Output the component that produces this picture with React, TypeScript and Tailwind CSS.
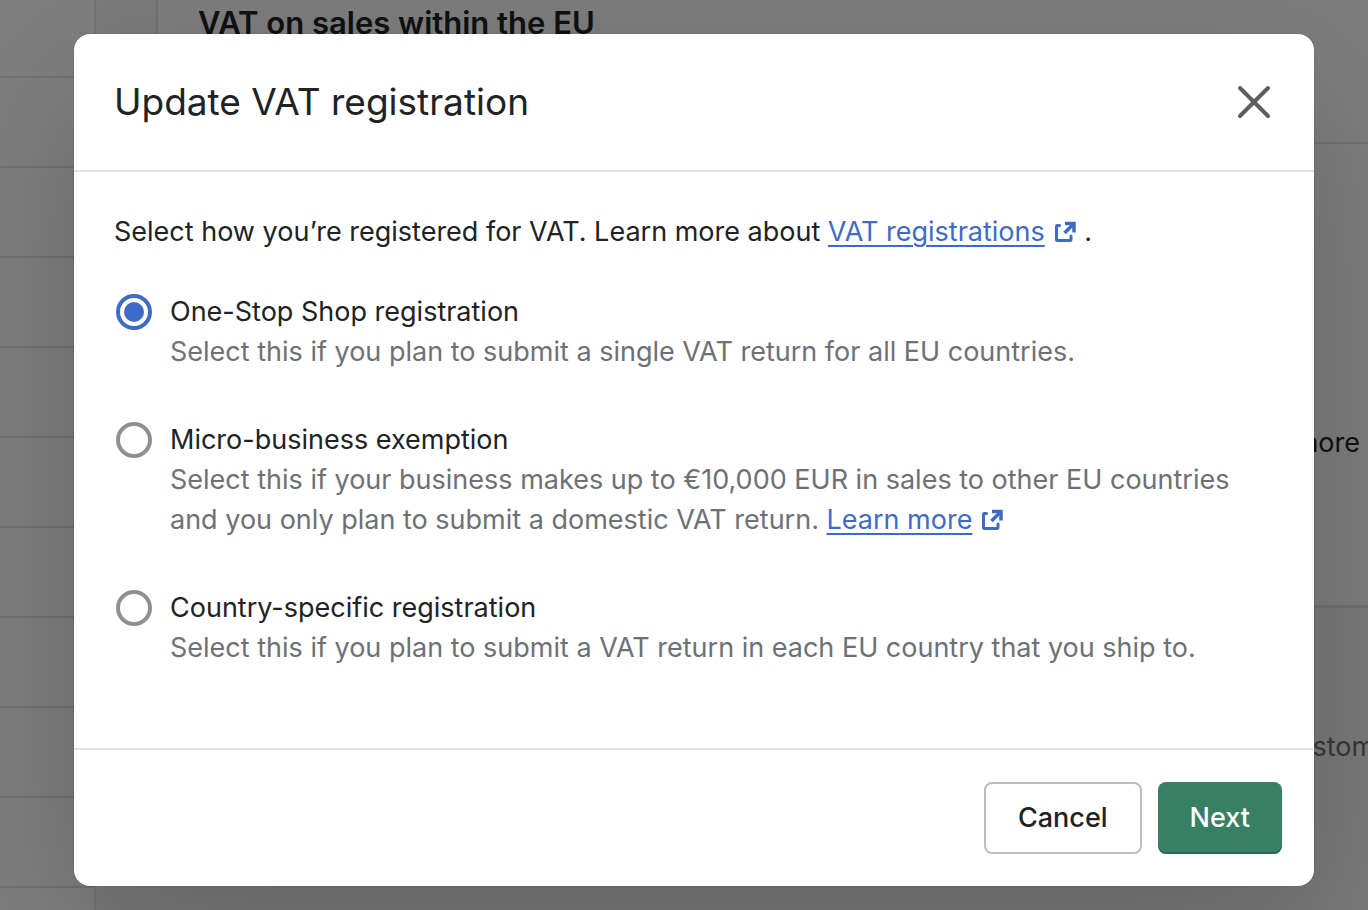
import { useState } from 'react';
import type { ReactNode } from 'react';

const navRows = ['Store details', 'Plan', 'Billing', 'Users', 'Payments', 'Checkout', 'Shipping', 'Taxes', 'Locations'];

function ExternalIcon() {
  return (
    <svg viewBox="0 0 40 40" className="-mr-2 inline-block h-10 w-10 align-bottom" fill="none" stroke="currentColor" strokeWidth="3" aria-hidden="true">
      <path d="M14.500 13.500h-2a1 1 0 0 0-1 1V27.500a1 1 0 0 0 1 1H25a1 1 0 0 0 1-1V24" strokeLinecap="round" />
      <path d="M20 11.500h9V20.500" strokeWidth="3.500" />
      <path d="M28.500 12L19.500 21" strokeWidth="3.500" />
    </svg>
  );
}

function ExternalLink({ children }: { children: ReactNode }) {
  return (
    <a href="#learn" className="whitespace-nowrap text-[#3f6bc4]">
      <span className="underline decoration-2 underline-offset-4">{children}</span>
      <ExternalIcon />
    </a>
  );
}

const options: { id: string; label: string; help: ReactNode }[] = [
  {
    id: 'oss',
    label: 'One-Stop Shop registration',
    help: 'Select this if you plan to submit a single VAT return for all EU countries.',
  },
  {
    id: 'micro',
    label: 'Micro-business exemption',
    help: (
      <>
        Select this if your business makes up to €10,000 EUR in sales to other EU countries and you only plan to
        submit a domestic VAT return. <ExternalLink>Learn more</ExternalLink>
      </>
    ),
  },
  {
    id: 'country',
    label: 'Country-specific registration',
    help: 'Select this if you plan to submit a VAT return in each EU country that you ship to.',
  },
];

// Settings page that sits behind the dialog
function SettingsPage() {
  return (
    <div className="flex h-screen overflow-hidden bg-[#f6f6f7]" aria-hidden="true">
      <div className="w-24 shrink-0 border-r-2 border-[#e9e9eb] bg-white">
        <div className="h-[78px] border-b-2 border-[#e4e4e6]" />
        {navRows.map((row) => (
          <div key={row} className="h-[90px] border-b-2 border-[#e4e4e6]" />
        ))}
      </div>
      <div className="min-w-0 flex-1 pl-15">
        <div className="h-[608px] border-b-3 border-l-2 border-[#e4e4e6] bg-[#fcfcfc]">
          <div className="h-36 border-b-2 border-[#e4e4e6] pl-10">
            <h2 className="pt-1 text-[31px] leading-[38px] font-semibold whitespace-nowrap">VAT on sales within the EU</h2>
          </div>
          <p className="pt-[279px] pr-2 text-right text-[27px] leading-10">more</p>
        </div>
        <p className="flex justify-end pt-[119px] text-[27px] leading-10 text-[#6d7175]">
          <span className="w-[87px]">customer</span>
        </p>
      </div>
    </div>
  );
}

export default function App() {
  const [selected, setSelected] = useState('oss');

  return (
    <div className="relative font-[Inter,'Liberation_Sans',sans-serif] text-[#202223]">
      <SettingsPage />

      <div className="absolute inset-0 bg-black/50 pt-[34px] pr-[54px] pb-6 pl-[74px]">
        <div
          role="dialog"
          aria-modal="true"
          aria-labelledby="dialog-title"
          className="rounded-2xl bg-white shadow-[0_52px_160px_rgba(0,0,0,0.2),0_0_2px_rgba(0,0,0,0.2)]"
        >
          <header className="flex items-center justify-between border-b-2 border-[#e1e3e5] px-10 py-10">
            <h1 id="dialog-title" className="text-[37px] leading-14">Update VAT registration</h1>
            <button type="button" aria-label="Close" className="text-[#5c5f62]">
              <svg viewBox="0 0 40 40" className="h-10 w-10" fill="none" stroke="currentColor" strokeWidth="4" strokeLinecap="round">
                <path d="M6 6l28 28M34 6L6 34" />
              </svg>
            </button>
          </header>

          <div className="px-10 pt-10 pb-20 text-[27px] leading-10">
            <p>
              Select how you’re registered for VAT. Learn more about <ExternalLink>VAT registrations</ExternalLink> .
            </p>
            <div role="radiogroup" aria-labelledby="dialog-title" className="mt-10 flex flex-col gap-12">
              {options.map((option) => (
                <div key={option.id} className="flex gap-4">
                  <div className="flex h-10 w-10 shrink-0 items-center justify-center">
                    <input
                      type="radio"
                      id={option.id}
                      name="registration"
                      checked={selected === option.id}
                      onChange={() => setSelected(option.id)}
                      aria-describedby={`${option.id}-help`}
                      className="h-9 w-9 appearance-none rounded-full border-4 border-[#8c9092] bg-clip-content p-1 checked:border-[#3f6bc4] checked:bg-[#3f6bc4]"
                    />
                  </div>
                  <div className="min-w-0">
                    <label htmlFor={option.id} className="block">{option.label}</label>
                    <div id={`${option.id}-help`} className="text-[#6d7175]">{option.help}</div>
                  </div>
                </div>
              ))}
            </div>
          </div>

          <footer className="flex justify-end gap-4 border-t-2 border-[#e1e3e5] p-8 text-[27px] font-medium">
            <button type="button" className="h-18 rounded-lg border-2 border-[#babfc3] bg-white px-8">Cancel</button>
            <button type="button" className="h-18 rounded-lg bg-[#378063] px-8 text-white shadow-[inset_0_-2px_0_rgba(0,0,0,0.2)]">Next</button>
          </footer>
        </div>
      </div>
    </div>
  );
}
